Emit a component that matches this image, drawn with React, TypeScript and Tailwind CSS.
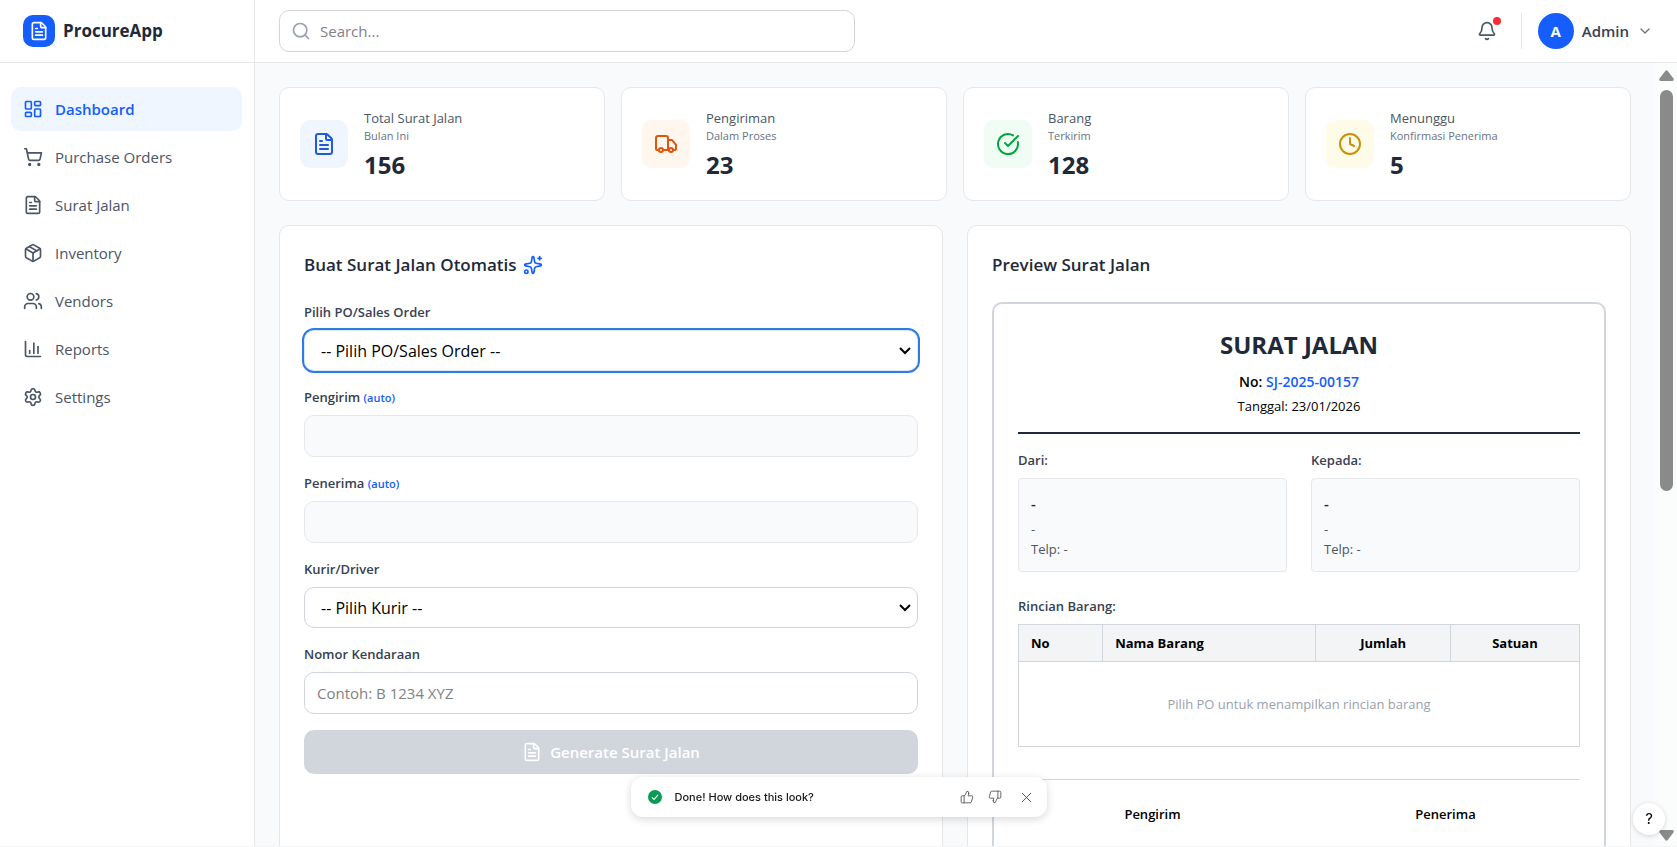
import {
  Bell,
  ChartColumn,
  ChevronDown,
  CircleCheckBig,
  Clock,
  FileText,
  LayoutDashboard,
  Package,
  Search,
  Settings,
  ShoppingCart,
  Sparkles,
  ThumbsDown,
  ThumbsUp,
  Truck,
  Users,
  X,
} from 'lucide-react'
import type { LucideIcon } from 'lucide-react'

const navItems: { label: string; icon: LucideIcon }[] = [
  { label: 'Dashboard', icon: LayoutDashboard },
  { label: 'Purchase Orders', icon: ShoppingCart },
  { label: 'Surat Jalan', icon: FileText },
  { label: 'Inventory', icon: Package },
  { label: 'Vendors', icon: Users },
  { label: 'Reports', icon: ChartColumn },
  { label: 'Settings', icon: Settings },
]

const stats = [
  { label: 'Total Surat Jalan', sub: 'Bulan Ini', value: '156', icon: FileText, tint: 'bg-blue-50 text-[#1f5bdc]' },
  { label: 'Pengiriman', sub: 'Dalam Proses', value: '23', icon: Truck, tint: 'bg-orange-50 text-[#e2540c]' },
  { label: 'Barang', sub: 'Terkirim', value: '128', icon: CircleCheckBig, tint: 'bg-green-50 text-green-600' },
  { label: 'Menunggu', sub: 'Konfirmasi Penerima', value: '5', icon: Clock, tint: 'bg-yellow-50 text-[#ca8f0c]' },
]

const labelClass = 'block text-[13px] leading-5 font-semibold text-gray-700 mb-2'
const titleClass = 'flex items-center gap-1.5 mb-[22px] text-[17px] leading-[30px] font-semibold text-gray-800'

function Sidebar() {
  return (
    <aside className="w-[255px] shrink-0 bg-white border-r border-gray-200">
      <div className="h-[63px] flex items-center gap-2 px-[23px] border-b border-gray-200">
        <div className="size-8 rounded-[10px] bg-[#155dfc] text-white flex items-center justify-center">
          <FileText size={20} />
        </div>
        <span className="text-[17px] font-bold text-gray-800">ProcureApp</span>
      </div>
      <nav className="py-6 pl-[11px] pr-3 space-y-1">
        {navItems.map(({ label, icon: Icon }, i) => (
          <a
            key={label}
            href="#"
            className={
              i === 0
                ? 'flex items-center gap-3 h-11 px-3 rounded-[10px] bg-blue-50 text-blue-600 font-semibold text-[15px]'
                : 'flex items-center gap-3 h-11 px-3 rounded-[10px] text-gray-600 text-[15px]'
            }
          >
            <Icon size={20} />
            {label}
          </a>
        ))}
      </nav>
    </aside>
  )
}

function Header() {
  return (
    <header className="h-[63px] shrink-0 flex items-center justify-between px-6 bg-white border-b border-gray-200">
      <div className="relative w-full max-w-xl">
        <Search size={20} className="absolute left-3 top-[11px] text-gray-400" />
        <input
          type="text"
          aria-label="Search"
          placeholder="Search..."
          className="w-full h-[42px] pl-10 pr-4 rounded-[10px] border border-gray-300 text-[15px] placeholder:text-[#808285]"
        />
      </div>
      <div className="flex items-center gap-4">
        <button type="button" aria-label="Notifications" className="relative p-2 text-gray-600">
          <Bell size={20} />
          <span className="absolute top-1 right-1 size-2 rounded-full bg-[#fb2c36]" />
        </button>
        <button type="button" className="flex items-center gap-2 pl-4 border-l border-gray-200 text-gray-700">
          <span className="size-9 rounded-full bg-[#155dfc] text-white text-[15px] font-bold flex items-center justify-center">
            A
          </span>
          <span className="text-[15px] font-semibold">Admin</span>
          <ChevronDown size={16} className="text-gray-500" />
        </button>
      </div>
    </header>
  )
}

function StatCards() {
  return (
    <div className="grid grid-cols-4 gap-4">
      {stats.map(({ label, sub, value, icon: Icon, tint }) => (
        <div key={label} className="flex items-center gap-4 p-5 bg-white border border-gray-200 rounded-[10px]">
          <div className={`size-12 shrink-0 rounded-[10px] flex items-center justify-center ${tint}`}>
            <Icon size={24} />
          </div>
          <div>
            <p className="text-[13px] leading-5 text-gray-600">{label}</p>
            <p className="text-[11px] leading-4 text-gray-500">{sub}</p>
            <p className="mt-1.5 text-2xl leading-[30px] font-bold text-gray-800">{value}</p>
          </div>
        </div>
      ))}
    </div>
  )
}

function SelectField({ id, label, option, focused }: { id: string; label: string; option: string; focused?: boolean }) {
  return (
    <div>
      <label htmlFor={id} className={labelClass}>{label}</label>
      <div className="relative">
        <select
          id={id}
          className={
            focused
              ? 'block w-full h-[41px] px-4 appearance-none rounded-[10px] border border-blue-100 bg-white text-base text-black outline-2 outline-[#2f7be5]'
              : 'block w-full h-[41px] px-4 appearance-none rounded-[10px] border border-gray-300 bg-white text-base text-black'
          }
        >
          <option>{option}</option>
        </select>
        <svg
          className="absolute right-[7px] top-[17px] pointer-events-none"
          width="12"
          height="8"
          viewBox="0 0 12 8"
          fill="none"
          stroke="#000"
          strokeWidth="2"
        >
          <path d="M1 1l5 5 5-5" />
        </svg>
      </div>
    </div>
  )
}

function AutoField({ id, label }: { id: string; label: string }) {
  return (
    <div>
      <label htmlFor={id} className={labelClass}>
        {label} <span className="text-[11px] leading-none text-blue-600">(auto)</span>
      </label>
      <input id={id} readOnly className="block w-full h-[42px] px-3 rounded-[10px] border border-gray-200 bg-gray-50" />
    </div>
  )
}

function DeliveryForm() {
  return (
    <section className="p-6 bg-white border border-gray-200 rounded-[10px]">
      <h2 className={titleClass}>
        Buat Surat Jalan Otomatis
        <Sparkles size={20} className="text-blue-600" />
      </h2>
      <form className="space-y-4">
        <SelectField id="po" label="Pilih PO/Sales Order" option="-- Pilih PO/Sales Order --" focused />
        <AutoField id="pengirim" label="Pengirim" />
        <AutoField id="penerima" label="Penerima" />
        <SelectField id="kurir" label="Kurir/Driver" option="-- Pilih Kurir --" />
        <div>
          <label htmlFor="kendaraan" className={labelClass}>Nomor Kendaraan</label>
          <input
            id="kendaraan"
            type="text"
            placeholder="Contoh: B 1234 XYZ"
            className="block w-full h-[42px] px-3 rounded-[10px] border border-gray-300 text-[15px] placeholder:text-[#808285]"
          />
        </div>
        <button
          type="button"
          disabled
          className="w-full h-11 flex items-center justify-center gap-2 rounded-[10px] bg-gray-300 text-white text-[15px] font-semibold"
        >
          <FileText size={20} />
          Generate Surat Jalan
        </button>
      </form>
    </section>
  )
}

function Party({ title }: { title: string }) {
  return (
    <div>
      <p className={labelClass}>{title}</p>
      <div className="p-3 rounded-sm border border-gray-200 bg-gray-50 text-[13px] leading-5 text-gray-600">
        <p className="text-[15px] leading-6 font-semibold text-gray-800">-</p>
        <p className="mt-1">-</p>
        <p>Telp: -</p>
      </div>
    </div>
  )
}

function Preview() {
  return (
    <section className="p-6 bg-white border border-gray-200 rounded-[10px]">
      <h2 className={titleClass}>Preview Surat Jalan</h2>
      <div className="p-6 border-2 border-gray-300 rounded-[10px]">
        <div className="pb-4 mb-4 border-b-2 border-gray-800 text-center text-[13px] leading-5 text-black">
          <h1 className="mb-2.5 text-2xl leading-[34px] font-bold text-gray-800">SURAT JALAN</h1>
          <p className="text-sm leading-5 font-semibold">
            No: <span className="text-blue-600">SJ-2025-00157</span>
          </p>
          <p className="mt-1">Tanggal: 23/01/2026</p>
        </div>
        <div className="grid grid-cols-2 gap-6 mb-6">
          <Party title="Dari:" />
          <Party title="Kepada:" />
        </div>
        <h3 className={labelClass}>Rincian Barang:</h3>
        <table className="w-full table-fixed border-collapse border border-gray-300 text-[13px] leading-5">
          <thead>
            <tr className="h-[37px] bg-gray-100 text-black">
              <th className="w-[15%] px-3 border border-gray-300 text-left">No</th>
              <th className="w-[38%] px-3 border border-gray-300 text-left">Nama Barang</th>
              <th className="w-[24%] px-3 border border-gray-300 text-center">Jumlah</th>
              <th className="w-[23%] px-3 border border-gray-300 text-center">Satuan</th>
            </tr>
          </thead>
          <tbody>
            <tr>
              <td colSpan={4} className="px-3 py-8 text-center text-gray-400">
                Pilih PO untuk menampilkan rincian barang
              </td>
            </tr>
          </tbody>
        </table>
        <div className="grid grid-cols-2 gap-6 mt-8 pt-6 pb-24 border-t border-gray-300 text-center text-[13px] leading-5 font-semibold text-black">
          <p>Pengirim</p>
          <p>Penerima</p>
        </div>
      </div>
    </section>
  )
}

function ScrollTrack() {
  return (
    <div aria-hidden="true" className="w-[22px] shrink-0 flex flex-col items-center pt-[7px] pb-[5px] bg-[#fbfcfc] text-[#8a8a8a]">
      <svg width="15" height="11" viewBox="0 0 15 11" fill="currentColor">
        <path d="M6.3 1Q7.5-.5 8.7 1L14.5 8.6Q15.4 10.8 13.4 11H1.6Q-.4 10.8.5 8.6Z" />
      </svg>
      <div className="mt-[9px] h-[52%] w-[13px] rounded-full bg-[#8a8a8a]" />
      <svg className="mt-auto" width="15" height="11" viewBox="0 0 15 11" fill="currentColor">
        <path d="M6.3 10Q7.5 11.5 8.7 10L14.5 2.4Q15.4.2 13.4 0H1.6Q-.4.2.5 2.4Z" />
      </svg>
    </div>
  )
}

function Toast() {
  return (
    <div
      role="status"
      className="fixed bottom-[30px] left-1/2 -translate-x-1/2 w-[416px] h-10 flex items-center pl-[17px] pr-3 rounded-xl bg-white shadow-[0_2px_8px_rgba(0,0,0,0.16)] font-['Inter',sans-serif]"
    >
      <svg width="14" height="14" viewBox="0 0 14 14">
        <circle cx="7" cy="7" r="7" fill="#0a9a55" />
        <path d="M4 7.4l2.1 2.1L10 4.8" fill="none" stroke="#fff" strokeWidth="1.1" />
      </svg>
      <span className="ml-[13px] text-[11px] font-medium text-neutral-900">Done! How does this look?</span>
      <div className="ml-auto flex items-center gap-3.5 text-neutral-600">
        <button type="button" aria-label="Good"><ThumbsUp size={14} strokeWidth={1.5} /></button>
        <button type="button" aria-label="Bad"><ThumbsDown size={14} strokeWidth={1.5} /></button>
        <button type="button" aria-label="Close" className="ml-0.5"><X size={17} strokeWidth={1.4} /></button>
      </div>
    </div>
  )
}

export default function App() {
  return (
    <div className="h-screen flex overflow-hidden bg-gray-50 border-b border-gray-100 font-['Open_Sans','Noto_Sans',sans-serif]">
      <Sidebar />
      <div className="flex-1 min-w-0 flex flex-col">
        <Header />
        <div className="flex-1 min-h-0 flex">
          <main className="flex-1 min-w-0 overflow-hidden p-6">
            <StatCards />
            <div className="mt-6 grid grid-cols-2 gap-6">
              <DeliveryForm />
              <Preview />
            </div>
          </main>
          <ScrollTrack />
        </div>
      </div>
      <Toast />
      <button
        type="button"
        aria-label="Help"
        className="fixed right-3 bottom-3 size-8 rounded-full bg-white shadow-[0_1px_5px_rgba(0,0,0,0.16)] text-[15px] text-black font-['Inter',sans-serif]"
      >
        ?
      </button>
    </div>
  )
}
